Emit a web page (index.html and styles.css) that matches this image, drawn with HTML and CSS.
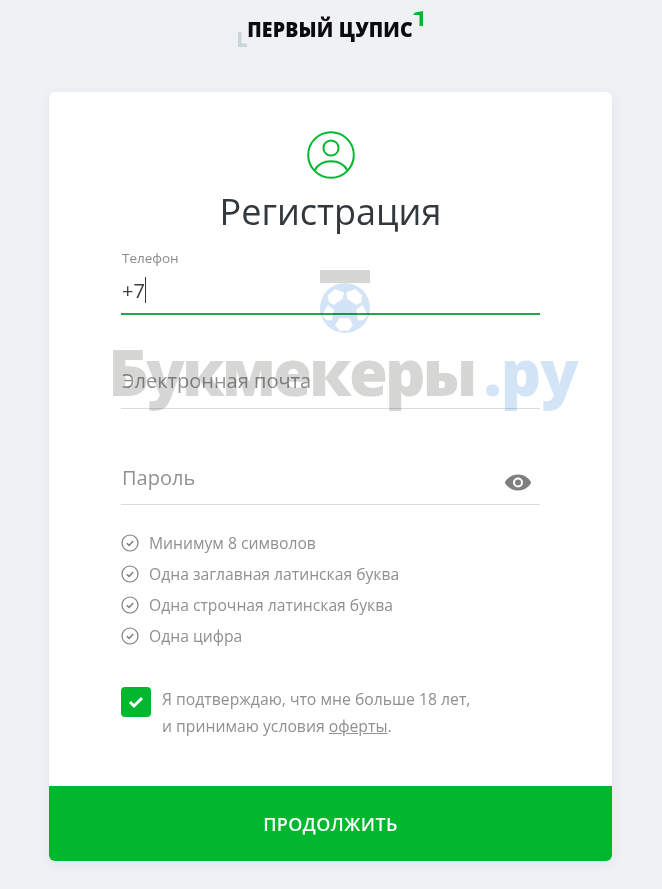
FILE: index.html
```html
<!DOCTYPE html>
<html lang="ru">
<head>
<meta charset="utf-8">
<title>Регистрация</title>
<link rel="stylesheet" href="styles.css">
</head>
<body>
<header class="logo">
  <svg class="logo-corner logo-corner-left" width="10" height="15" viewBox="0 0 10 15"><path d="M1 0h3.500v11.500H10V15H1z" fill="#c9d6d8"/></svg>
  <span class="logo-text">ПЕРВЫЙ ЦУПИС</span>
  <svg class="logo-corner logo-corner-right" width="10" height="15" viewBox="0 0 10 15"><path d="M2 1.500 10 0v15H6.500V4H0z" fill="#00b72e"/></svg>
</header>
<main class="card">
  <div class="card-body">
    <svg class="user-icon" width="48" height="48" viewBox="0 0 48 48" fill="none" stroke="#00b72e" stroke-width="2">
      <circle cx="24" cy="24" r="22.800"/>
      <circle cx="24" cy="17" r="7.600"/>
      <path d="M7.500 39.500C11 33 17 30.300 24 30.300S37 33 40.500 39.500"/>
    </svg>
    <h1 class="title">Регистрация</h1>
    <div class="field field-active">
      <div class="field-label">Телефон</div>
      <div class="field-value">+7<span class="caret"></span></div>
    </div>
    <div class="field field-email">
      <div class="field-placeholder">Электронная почта</div>
    </div>
    <div class="field field-password">
      <div class="field-placeholder">Пароль</div>
      <svg class="eye" width="28" height="18" viewBox="0 0 28 18"><path fill-rule="evenodd" fill="#7f7f7f" d="M14 1.500C8 1.500 3 4.800.8 9.500 3 14.200 8 17.500 14 17.500s11-3.300 13.200-8C25 4.800 20 1.500 14 1.500zM14 4.500a5 5 0 1 1 0 10 5 5 0 0 1 0-10z"/><circle cx="14" cy="9.500" r="3" fill="#7f7f7f"/></svg>
    </div>
    <ul class="rules">
      <li class="rule"><svg class="rule-icon" width="18" height="18" viewBox="0 0 18 18" fill="none" stroke="#7d7d7d"><circle cx="9" cy="9" r="8" stroke-width="1.200"/><path d="M5.800 9.200l2.300 2.200 4.100-4.400" stroke-width="1.500"/></svg>Минимум 8 символов</li>
      <li class="rule"><svg class="rule-icon" width="18" height="18" viewBox="0 0 18 18" fill="none" stroke="#7d7d7d"><circle cx="9" cy="9" r="8" stroke-width="1.200"/><path d="M5.800 9.200l2.300 2.200 4.100-4.400" stroke-width="1.500"/></svg>Одна заглавная латинская буква</li>
      <li class="rule"><svg class="rule-icon" width="18" height="18" viewBox="0 0 18 18" fill="none" stroke="#7d7d7d"><circle cx="9" cy="9" r="8" stroke-width="1.200"/><path d="M5.800 9.200l2.300 2.200 4.100-4.400" stroke-width="1.500"/></svg>Одна строчная латинская буква</li>
      <li class="rule"><svg class="rule-icon" width="18" height="18" viewBox="0 0 18 18" fill="none" stroke="#7d7d7d"><circle cx="9" cy="9" r="8" stroke-width="1.200"/><path d="M5.800 9.200l2.300 2.200 4.100-4.400" stroke-width="1.500"/></svg>Одна цифра</li>
    </ul>
    <div class="agree">
      <span class="checkbox"><svg width="16" height="14" viewBox="0 0 16 14" fill="none" stroke="#fff" stroke-width="3"><path d="M2 7l4 4 8-8"/></svg></span>
      <p class="agree-text">Я подтверждаю, что мне больше 18 лет,<br>и принимаю условия <a class="offer" href="#">оферты</a>.</p>
    </div>
  </div>
  <button class="submit" type="button">ПРОДОЛЖИТЬ</button>
</main>
<div class="watermark">
  <svg class="wm-ball" width="50" height="63" viewBox="0 0 50 63">
    <rect x="0" y="0" width="50" height="13" fill="#d6d6d5"/>
    <circle cx="25" cy="38" r="25" fill="#d4e4f7"/>
    <g fill="#fff" stroke="#fff" stroke-width="1.500" stroke-linejoin="round">
      <path d="M15 20l8 3-1 5.500-8 5.500-4.500-2-1-6.300z"/>
      <path d="M35 20l-8 3 1 5.500 8 5.500 4.500-2 1-6.300z"/>
      <path d="M8 36l5 4-1.500 9.500H7L3 45z"/>
      <path d="M42 36l-5 4 1.500 9.500H43L47 45z"/>
      <path d="M20 49h9l3 6-4 5h-8l-4-5z"/>
    </g>
  </svg>
  <div class="wm-text">Букмекеры<span class="wm-ru">.ру</span></div>
</div>
</body>
</html>
```

FILE: styles.css
```css
* { box-sizing: border-box; }
html, body { margin: 0; padding: 0; }
body {
  position: relative;
  height: 889px;
  overflow: hidden;
  background: #eff1f5;
  font-family: "Open Sans", "Noto Sans", sans-serif;
  color: #8f9192;
}
.logo {
  height: 92px;
  padding: 10px 2px 0 0;
  display: flex;
  justify-content: center;
  align-items: flex-start;
}
.logo-text {
  font-size: 21px;
  line-height: 38px;
  font-weight: 800;
  color: #0b0b0b;
  letter-spacing: 0.2px;
  margin: 0 -6px;
  transform: scaleX(0.93);
  white-space: nowrap;
}
.logo-corner { flex: none; }
.logo-corner-left { margin: 22px 0 0 0; }
.logo-corner-right { margin: 1px 0 0 0; }
.card {
  width: 563px;
  height: 769px;
  margin-left: 49px;
  background: #fff;
  border-radius: 6px;
  box-shadow: 0 3px 12px rgba(60, 70, 90, .08);
  display: flex;
  flex-direction: column;
  overflow: hidden;
}
.card-body {
  flex: 1;
  padding: 39px 72px 0;
  display: flex;
  flex-direction: column;
}
.user-icon { align-self: center; flex: none; }
.title {
  margin: 9px 0 0;
  font-size: 36px;
  line-height: 48px;
  font-weight: 400;
  text-align: center;
  color: #33383c;
}
.field {
  position: relative;
  border-bottom: 1px solid #dcdcdc;
}
.field-active {
  margin-top: 13px;
  height: 66px;
  border-bottom: 2px solid #1fa84a;
}
.field-label {
  font-size: 13.500px;
  line-height: 18px;
  color: #8c8c8c;
  padding-left: 1px;
}
.field-value {
  margin-top: 10px;
  font-size: 20px;
  line-height: 27px;
  color: #3b3f42;
  display: flex;
  padding-left: 1px;
}
.caret {
  display: inline-block;
  width: 1px;
  height: 26px;
  background: #33383c;
}
.field-email { margin-top: 45px; height: 49px; }
.field-password { margin-top: 47px; height: 49px; }
.field-placeholder {
  font-size: 20px;
  line-height: 26px;
  color: #909294;
  padding-top: 8px;
  padding-left: 1px;
}
.field-password .field-placeholder { padding-top: 9px; }
.eye { position: absolute; right: 8px; top: 17px; }
.rules {
  list-style: none;
  margin: 27px 0 0;
  padding: 0;
  display: flex;
  flex-direction: column;
  gap: 9px;
}
.rule {
  display: flex;
  align-items: center;
  gap: 10px;
  font-size: 15.700px;
  line-height: 22px;
  color: #8e9091;
}
.rule-icon { flex: none; }
.agree {
  margin-top: 33px;
  display: flex;
  gap: 11px;
}
.checkbox {
  flex: none;
  width: 30px;
  height: 30px;
  margin-top: 7px;
  border-radius: 4px;
  background: #00b72e;
  display: flex;
  align-items: center;
  justify-content: center;
}
.agree-text {
  margin: 0;
  padding-top: 6px;
  font-size: 15.750px;
  line-height: 27px;
  color: #8e9091;
}
.offer { color: inherit; text-decoration: underline; }
.submit {
  flex: none;
  width: 100%;
  height: 75px;
  border: 0;
  padding: 0;
  background: #00b72e;
  color: #fff;
  font-family: inherit;
  font-size: 18px;
  font-weight: 600;
  letter-spacing: 0.4px;
}
.watermark {
  position: absolute;
  left: 0;
  top: 270px;
  width: 662px;
  display: flex;
  flex-direction: column;
  align-items: center;
  mix-blend-mode: multiply;
  pointer-events: none;
}
.wm-ball { margin-left: 27px; }
.wm-text {
  margin: -1px 0 0 24px;
  font-size: 63px;
  line-height: 80px;
  font-weight: 800;
  letter-spacing: -2.800px;
  color: #d6d6d5;
  white-space: nowrap;
}
.wm-ru { color: #d4e4f7; margin-left: 9px; letter-spacing: -1px; }
```
